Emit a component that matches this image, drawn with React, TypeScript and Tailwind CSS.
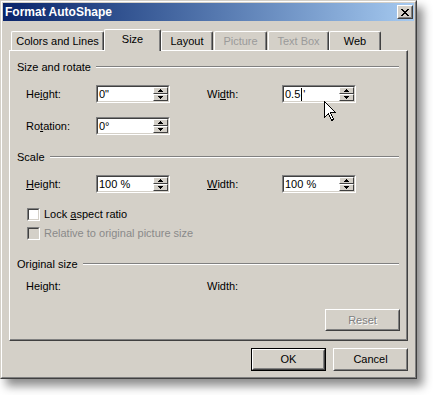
import type { ReactNode } from 'react';

function SpinButton({ up }: { up: boolean }) {
  return (
    <div className="flex h-[7px] w-[15px] items-center justify-center border border-t-white border-l-white border-b-[#404040] border-r-[#404040] bg-[#d4d0c8]">
      <svg width="5" height="3" viewBox="0 0 5 3" shapeRendering="crispEdges">
        {up ? <path d="M2 0h1v1h1v1h1v1H0V2h1V1h1z" fill="#000" /> : <path d="M0 0h5v1H4v1H3v1H2V2H1V1H0z" fill="#000" />}
      </svg>
    </div>
  );
}

function SpinBox({ children }: { children: ReactNode }) {
  return (
    <div className="flex h-[18px] w-[74px] border border-t-[#808080] border-l-[#808080] border-b-white border-r-white">
      <div className="flex flex-1 border border-t-[#404040] border-l-[#404040] border-b-[#d4d0c8] border-r-[#d4d0c8] bg-white">
        <div className="flex flex-1 items-center pl-[1px] text-[11px] leading-[14px] text-black">{children}</div>
        <div className="flex flex-col">
          <SpinButton up />
          <SpinButton up={false} />
        </div>
      </div>
    </div>
  );
}

function Check({ disabled, label }: { disabled?: boolean; label: ReactNode }) {
  return (
    <div className="flex h-[15px] items-center pl-[17px]">
      <div className="h-[13px] w-[13px] border border-t-[#808080] border-l-[#808080] border-b-white border-r-white">
        <div className={`h-full w-full border border-t-[#404040] border-l-[#404040] border-b-[#d4d0c8] border-r-[#d4d0c8] ${disabled ? 'bg-[#d4d0c8]' : 'bg-white'}`} />
      </div>
      <span className={`ml-[4px] text-[11px] ${disabled ? 'text-[#8a8a8a]' : 'text-black'}`}>{label}</span>
    </div>
  );
}

function Section({ title }: { title: string }) {
  return (
    <div className="flex h-[16px] items-center pl-[7px] pr-[7px]">
      <span className="text-[11px] text-black">{title}</span>
      <div className="ml-[5px] flex-1 border-t border-b border-t-[#808080] border-b-white" />
    </div>
  );
}

function Raised({ children, className }: { children: ReactNode; className?: string }) {
  return (
    <div className={`border border-t-white border-l-white border-b-[#404040] border-r-[#404040] bg-[#d4d0c8] ${className ?? ''}`}>
      <div className="flex h-full w-full items-center justify-center border border-t-[#d4d0c8] border-l-[#d4d0c8] border-b-[#808080] border-r-[#808080] text-[11px]">
        {children}
      </div>
    </div>
  );
}

function Tab({ label, selected, disabled, w }: { label: string; selected?: boolean; disabled?: boolean; w: string }) {
  return (
    <div
      className={`flex items-center justify-center rounded-t-[2px] border-l border-t border-r border-l-white border-t-white border-r-[#404040] bg-[#d4d0c8] shadow-[inset_-1px_0_0_#808080] text-[11px] ${w} ${
        selected ? 'relative z-10 mb-[-1px] h-[22px] pb-[2px]' : 'h-[19px] pt-[1px]'
      } ${disabled ? 'text-[#9a9a9a]' : 'text-black'}`}
    >
      {label}
    </div>
  );
}

export default function App() {
  return (
    <div className="min-h-screen bg-white [font-family:'Liberation_Sans',Arial,sans-serif]">
      <div className="relative h-[379px] w-[417px] border border-t-[#d4d0c8] border-l-[#d4d0c8] border-b-[#404040] border-r-[#404040] bg-[#d4d0c8] shadow-[6px_7px_9px_rgba(0,0,0,0.45)]">
        <div className="flex h-full flex-col border border-t-white border-l-white border-b-[#808080] border-r-[#808080] p-[1px]">
          {/* title bar */}
          <div className="flex h-[18px] items-center bg-gradient-to-r from-[#0a246a] to-[#a6caf0] pl-[2px] pr-[1px]">
            <span className="flex-1 text-[12px] font-bold text-white">Format AutoShape</span>
            <Raised className="h-[14px] w-[16px]">
              <svg width="8" height="7" viewBox="0 0 8 7" shapeRendering="crispEdges">
                <path d="M0 0h2v1h1v1h2V1h1V0h2v1H7v1H6v1H5v1h1v1h1v1h1v1H6V6H5V5H3v1H2v1H0V6h1V5h1V4h1V3H2V2H1V1H0z" fill="#000" />
              </svg>
            </Raised>
          </div>

          {/* tabs */}
          <div className="flex h-[29px] items-end pl-[8px]">
            <Tab label="Colors and Lines" w="w-[93px]" />
            <Tab label="Size" w="w-[57px]" selected />
            <Tab label="Layout" w="w-[52px]" />
            <div className="w-[1px]" />
            <Tab label="Picture" w="w-[53px]" disabled />
            <div className="w-[1px]" />
            <Tab label="Text Box" w="w-[61px]" disabled />
            <Tab label="Web" w="w-[52px]" />
          </div>

          {/* panel */}
          <div className="mx-[6px] h-[291px] border border-t-white border-l-white border-b-[#404040] border-r-[#404040]">
            <div className="flex h-full flex-col border-r border-b border-r-[#808080] border-b-[#808080]">
              <div className="mt-[8px]">
                <Section title="Size and rotate" />
              </div>
              <div className="mt-[10px] flex h-[18px] items-center pl-[16px] text-[11px]">
                <span className="w-[70px]">
                  He<u>i</u>ght:
                </span>
                <SpinBox>0"</SpinBox>
                <span className="ml-[37px] w-[75px]">
                  Wi<u>d</u>th:
                </span>
                <SpinBox>
                  0.5<span className="mx-[1px] inline-block h-[13px] w-[1px] bg-black" />'
                </SpinBox>
              </div>
              <div className="mt-[14px] flex h-[18px] items-center pl-[16px] text-[11px]">
                <span className="w-[70px]">
                  Ro<u>t</u>ation:
                </span>
                <SpinBox>0°</SpinBox>
              </div>
              <div className="mt-[14px]">
                <Section title="Scale" />
              </div>
              <div className="mt-[10px] flex h-[18px] items-center pl-[16px] text-[11px]">
                <span className="w-[70px]">
                  <u>H</u>eight:
                </span>
                <SpinBox>100 %</SpinBox>
                <span className="ml-[37px] w-[75px]">
                  <u>W</u>idth:
                </span>
                <SpinBox>100 %</SpinBox>
              </div>
              <div className="mt-[14px]">
                <Check
                  label={
                    <>
                      Lock <u>a</u>spect ratio
                    </>
                  }
                />
              </div>
              <div className="mt-[4px]">
                <Check disabled label="Relative to original picture size" />
              </div>
              <div className="mt-[15px]">
                <Section title="Original size" />
              </div>
              <div className="mt-[6px] flex h-[16px] items-center pl-[16px] text-[11px]">
                <span className="w-[181px]">Height:</span>
                <span>Width:</span>
              </div>
              <div className="mt-[15px] flex justify-end pr-[6px]">
                <Raised className="h-[22px] w-[75px]">
                  <span className="text-[#808080] [text-shadow:1px_1px_0_#fff]">Reset</span>
                </Raised>
              </div>
            </div>
          </div>

          {/* buttons */}
          <div className="mt-[7px] flex justify-end gap-[7px] pr-[6px]">
            <div className="h-[23px] w-[75px] border border-black">
              <Raised className="h-full w-full">OK</Raised>
            </div>
            <Raised className="h-[23px] w-[75px]">Cancel</Raised>
          </div>
        </div>

        {/* mouse pointer */}
        <svg className="absolute left-[323px] top-[100px]" width="13" height="21" viewBox="0 0 13 21" shapeRendering="crispEdges">
          <path d="M0.5 0.5V16.5L4.5 12.5L7.5 19.5L9.5 18.5L6.5 11.5H11.5Z" fill="#fff" stroke="#000" strokeWidth="1" />
        </svg>
      </div>
    </div>
  );
}
